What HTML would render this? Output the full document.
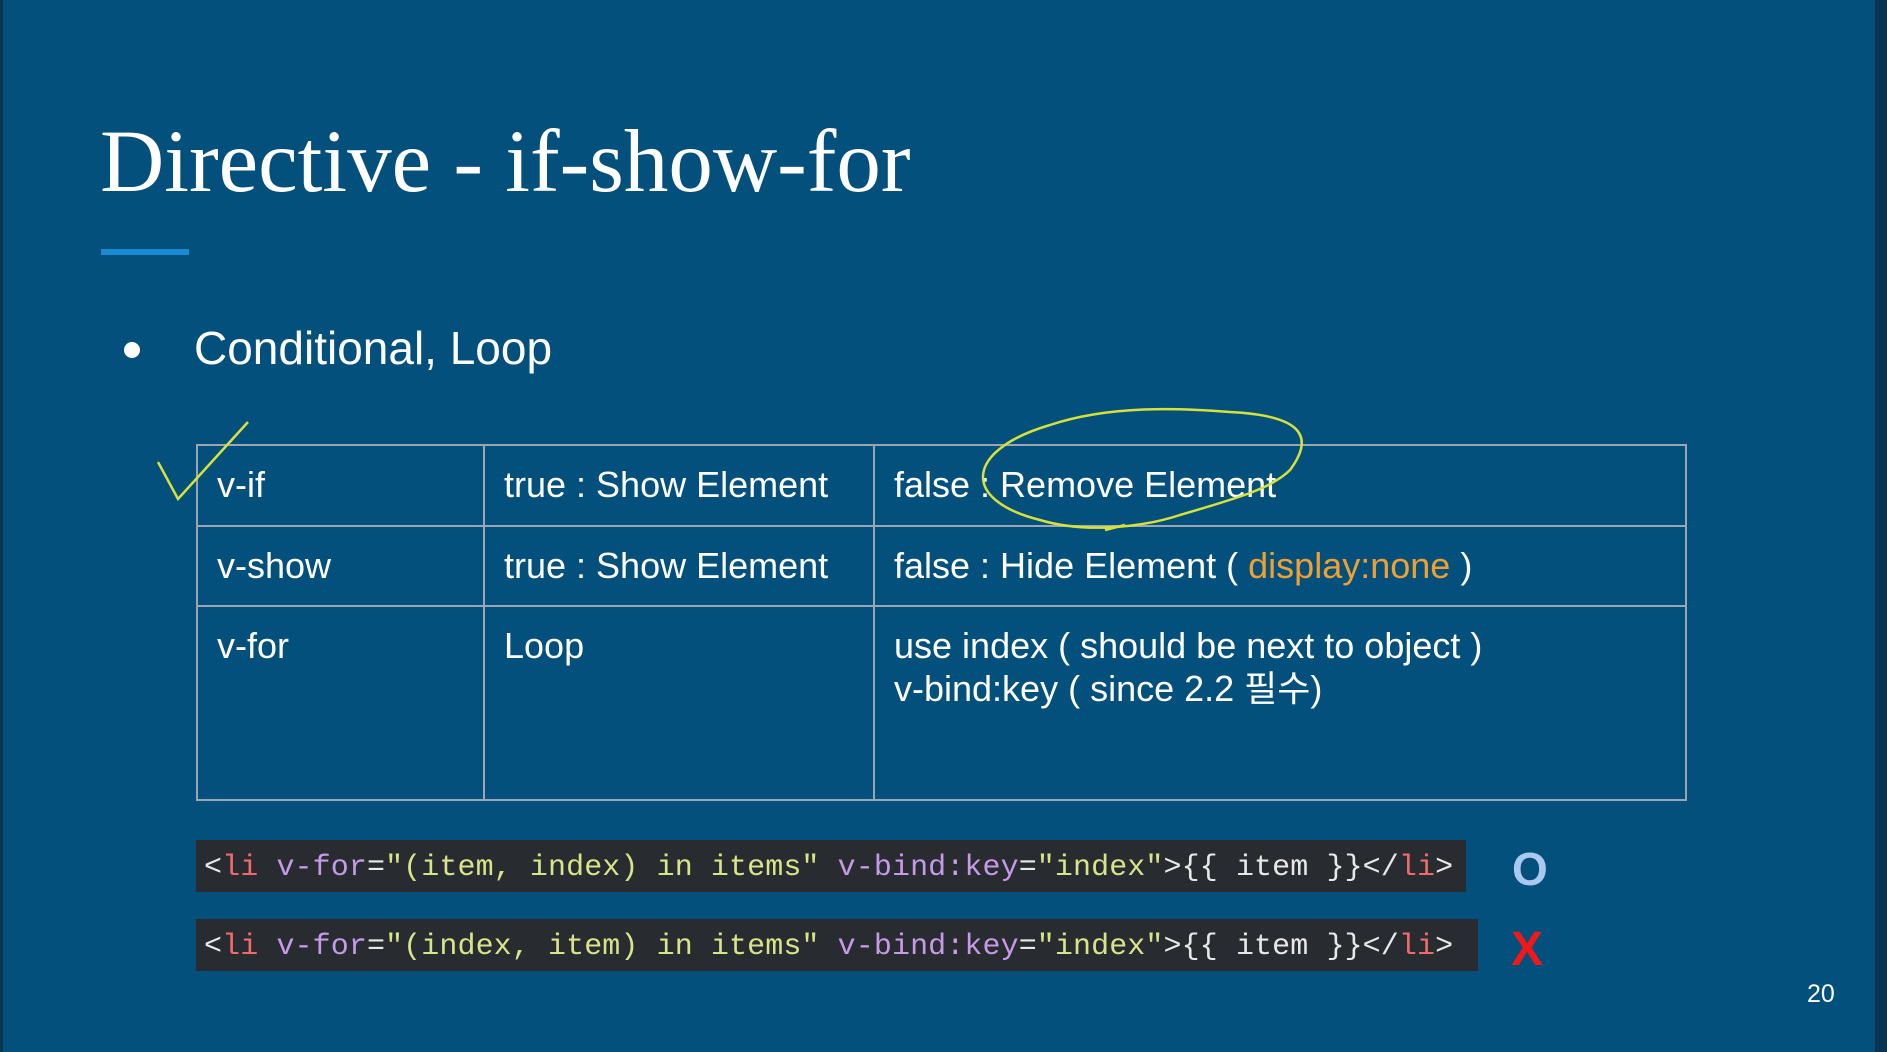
<!DOCTYPE html>
<html><head><meta charset="utf-8"><style>
html,body{margin:0;padding:0}
body{width:1887px;height:1052px;background:#03507d;position:relative;overflow:hidden;font-family:"Liberation Sans","Noto Sans CJK KR",sans-serif;color:#fff}
.edge{position:absolute;top:0;bottom:0;background:#0a3550}
h1{position:absolute;left:100px;top:118px;margin:0;font-weight:normal;font-size:89px;line-height:1;font-family:"Liberation Serif","DejaVu Serif",serif}
.bar{position:absolute;left:101px;top:249px;width:88px;height:6px;background:#1a8ad4}
.bullet{position:absolute;left:124px;top:342px;width:16px;height:16px;border-radius:50%;background:#fff}
.sub{position:absolute;left:194px;top:322px;font-size:46px;line-height:52px}
table{position:absolute;left:196px;top:444px;border-collapse:collapse;font-size:36px}
td{border:2px solid #9aa6b2;padding:0 0 0 19px;vertical-align:top;line-height:43px}
.cw{position:absolute;height:52px;background:#282c30;font-family:"Liberation Mono",monospace;font-size:30px;letter-spacing:0.1px;line-height:57px;padding-left:8px;box-sizing:border-box;white-space:pre;color:#e8e8e8}
.r{color:#f06a6a}.p{color:#c79ae8}.y{color:#d8e48a}
</style></head><body>
<div class="edge" style="left:0;width:3px"></div>
<div class="edge" style="right:0;width:12px"></div>
<h1>Directive - if-show-for</h1>
<div class="bar"></div>
<div class="bullet"></div>
<div class="sub">Conditional, Loop</div>
<table>
<tr style="height:81px"><td style="width:266px;padding-top:17px">v-if</td><td style="width:369px;padding-top:17px">true : Show Element</td><td style="width:791px;padding-top:17px">false : Remove Element</td></tr>
<tr style="height:80px"><td style="padding-top:17px">v-show</td><td style="padding-top:17px">true : Show Element</td><td style="padding-top:17px">false : Hide Element ( <span style="color:#f0a030">display:none</span> )</td></tr>
<tr style="height:194px"><td style="padding-top:17px">v-for</td><td style="padding-top:17px">Loop</td><td style="padding-top:17px">use index ( should be next to object )<br>v-bind:key ( since 2.2 필수)</td></tr>
</table>
<div class="cw" style="left:196px;top:840px;width:1270px">&lt;<span class="r">li</span> <span class="p">v-for</span>=<span class="y">"(item, index) in items"</span> <span class="p">v-bind:key</span>=<span class="y">"index"</span>&gt;{{ item }}&lt;/<span class="r">li</span>&gt;</div>
<div class="cw" style="left:196px;top:919px;width:1282px">&lt;<span class="r">li</span> <span class="p">v-for</span>=<span class="y">"(index, item) in items"</span> <span class="p">v-bind:key</span>=<span class="y">"index"</span>&gt;{{ item }}&lt;/<span class="r">li</span>&gt;</div>
<div style="position:absolute;left:1512px;top:842px;font-size:46px;font-weight:bold;color:#a9c9f0">O</div>
<div style="position:absolute;left:1511px;top:922px;font-size:48px;font-weight:bold;color:#f01818">X</div>
<div style="position:absolute;left:1807px;top:980px;font-size:25px">20</div>
<svg width="1887" height="1052" style="position:absolute;left:0;top:0" fill="none" stroke="#d6e23a" stroke-width="2.5">
<path d="M158 462 L178 499 L248 422"/>
<path d="M1290 470 C1320 430 1290 415 1230 412 C1180 408 1110 405 1050 425 C965 450 960 500 1040 520 C1090 535 1150 525 1180 515 C1230 500 1270 490 1290 470 M1105 530 L1125 525"/>
</svg>
</body></html>
